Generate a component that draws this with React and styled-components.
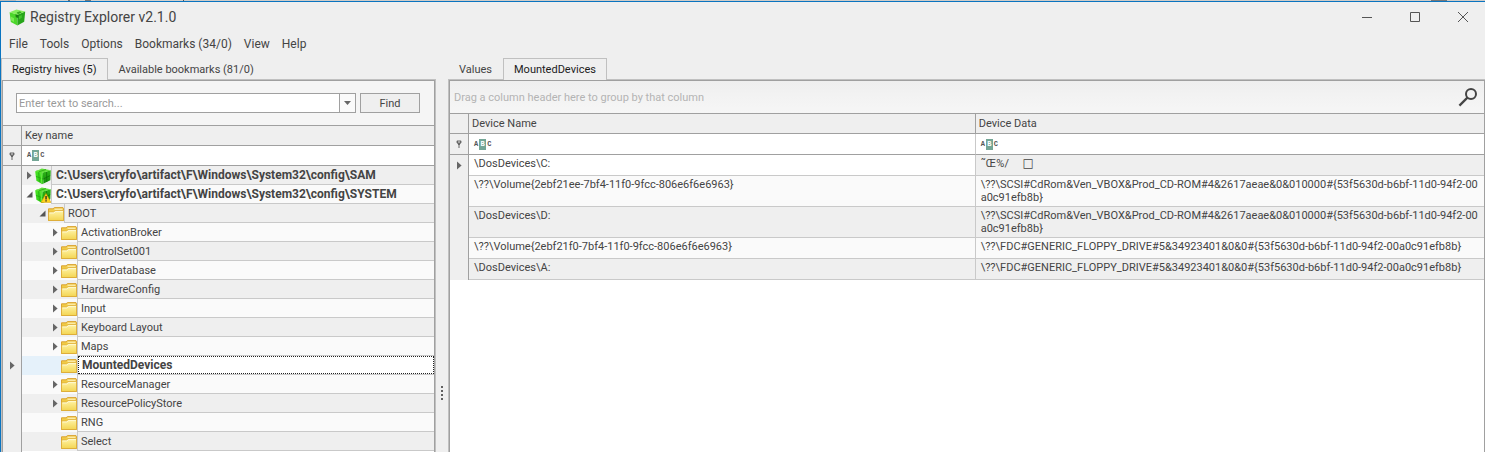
import React from 'react';
import styled, { createGlobalStyle } from 'styled-components';

const c = {
  face: '#efefef',
  alt: '#fafafa',
  text: '#444444',
  edge: '#a0a0a0',
  soft: '#c0c0c0',
  row: '#c9c9c9',
  glyph: '#666666',
  accent: '#0a74c0',
};

const Global = createGlobalStyle`
  * { box-sizing: border-box; }
  body {
    margin: 0;
    background: ${c.face};
    color: ${c.text};
    font: 11px/13px Roboto, "Liberation Sans", sans-serif;
  }
  button, input { font: inherit; color: inherit; margin: 0; }
  svg { display: block; flex: none; }
`;

const Page = styled.div`
  display: flex;
  flex-direction: column;
  height: 100vh;
  overflow: hidden;
`;

const Backdrop = styled.div`
  flex: none;
  height: 1px;
  background: linear-gradient(90deg, #b9b9b9 0 16px, #d3d0cc 16px 68px, #6b6b6b 68px 70px, #d3d0cc 70px 85px, #777 85px 91px, #d3d0cc 91px 183px, #555 183px 184px, #cfccc8 184px calc(100% - 54px), #777 calc(100% - 54px) calc(100% - 38px), #cfccc8 calc(100% - 38px));
`;

const Window = styled.div`
  flex: 1;
  min-height: 0;
  display: flex;
  flex-direction: column;
  border-top: 1px solid ${c.accent};
  border-left: 1px solid ${c.accent};
`;

const TitleBar = styled.header`
  flex: none;
  display: flex;
  align-items: center;
  height: 30px;
  padding-left: 8px;
`;

const Title = styled.h1`
  flex: 1;
  margin: 0 0 0 4px;
  font-size: 14px;
  line-height: 16px;
  font-weight: 400;
`;

const Caption = styled.div`
  display: flex;
  gap: 4px;
`;

const CaptionButton = styled.button`
  display: flex;
  align-items: center;
  justify-content: center;
  width: 44px;
  height: 28px;
  padding: 0;
  border: 0;
  background: none;
`;

const MenuBar = styled.nav`
  flex: none;
  display: flex;
  align-items: center;
  gap: 12px;
  height: 24px;
  padding-left: 8px;
`;

const MenuItem = styled.button`
  padding: 0;
  border: 0;
  background: none;
  font-size: 12px;
  line-height: 16px;
`;

const Workspace = styled.main`
  flex: 1;
  min-height: 0;
  display: grid;
  grid-template-columns: minmax(0, 435fr) 12px minmax(0, 1037fr);
  padding-top: 2px;
`;

const Pane = styled.section`
  display: flex;
  flex-direction: column;
  min-width: 0;
  min-height: 0;
`;

const TabStrip = styled.div`
  flex: none;
  position: relative;
  z-index: 1;
  display: flex;
  height: 22px;
  margin-bottom: -1px;
`;

const Tab = styled.button`
  padding: 0 10px;
  border: 1px solid ${(p) => (p.$active ? c.soft : 'transparent')};
  border-bottom: 0;
  background: ${(p) => (p.$active ? c.face : 'transparent')};
  color: ${(p) => (p.$active ? '#1c1c1c' : c.text)};
  line-height: 20px;
`;

const Frame = styled.div`
  flex: 1;
  min-height: 0;
  border: 1px solid ${c.soft};
  border-bottom: 0;
  ${(p) => p.$flush && 'border-right: 0;'}
`;

const Inner = styled.div`
  height: 100%;
  display: flex;
  flex-direction: column;
  overflow: hidden;
  border: 1px solid ${c.edge};
  border-bottom: 0;
  background: #fff;
`;

const Splitter = styled.div`
  display: flex;
  flex-direction: column;
  align-items: center;
  gap: 2px;
  padding-top: 328px;
`;

const Grip = styled.i`
  flex: none;
  width: 2px;
  height: 2px;
  background: #606060;
`;

const SearchBar = styled.form`
  flex: none;
  display: flex;
  gap: 4px;
  padding: 12px 14px 12px 13px;
  background: #f5f5f5;
`;

const Combo = styled.div`
  flex: 1;
  min-width: 0;
  display: flex;
  height: 20px;
  border: 1px solid ${c.edge};
  background: #fff;
`;

const SearchInput = styled.input`
  flex: 1;
  min-width: 0;
  padding: 0 2px;
  border: 0;
  outline: 0;
  background: none;
  &::placeholder { color: #9a9a9a; opacity: 1; }
`;

const DropButton = styled.button`
  display: flex;
  align-items: center;
  justify-content: center;
  width: 16px;
  padding: 0;
  border: 0;
  border-left: 1px solid ${c.edge};
  background: ${c.alt};
`;

const FindButton = styled.button`
  width: 60px;
  height: 20px;
  padding: 0;
  border: 1px solid ${c.edge};
  background: ${c.face};
`;

const TreeHead = styled.div`
  flex: none;
  display: flex;
  height: 20px;
  border-top: 1px solid ${c.edge};
  line-height: 19px;
  background: ${(p) => (p.$filter ? '#fff' : c.face)};
`;

const Gutter = styled.div`
  flex: none;
  display: flex;
  align-items: center;
  justify-content: center;
  width: 19px;
  border-right: 1px solid ${c.edge};
  background: ${c.face};
`;

const HeadText = styled.div`
  padding-left: 3px;
`;

const FilterCell = styled.label`
  flex: 1;
  display: flex;
  align-items: center;
  padding-left: 5px;
`;

const FilterInput = styled.input`
  flex: 1;
  min-width: 0;
  padding: 0 2px;
  border: 0;
  outline: 0;
  background: none;
`;

const Abc = styled.span`
  display: flex;
  align-items: center;
  gap: 1px;
  font: bold 7px/11px "Liberation Mono", monospace;
  color: #555;
`;

const AbcMark = styled.b`
  width: 7px;
  text-align: center;
  background: #74a696;
  color: #fff;
`;

const Tree = styled.ul`
  flex: 1;
  min-height: 0;
  overflow: hidden;
  margin: 0;
  padding: 0;
  list-style: none;
  border-top: 1px solid ${c.edge};
  background: linear-gradient(90deg, ${c.face} 18px, ${c.edge} 18px 19px, #fff 19px);
`;

const TreeRow = styled.li`
  display: flex;
  height: 19px;
  background: ${(p) => (p.$selected ? '#e5f1fa' : p.$even ? c.face : c.alt)};
`;

const Branch = styled.div`
  flex: none;
  display: flex;
  align-items: center;
  padding-left: ${(p) => 3 + p.$level * 13}px;
`;

const Expander = styled.span`
  width: 9px;
  margin-right: 1px;
  display: flex;
  justify-content: center;
`;

const KeyCell = styled.div`
  flex: 1;
  min-width: 0;
  border-left: 1px solid ${c.row};
  border-bottom: 1px solid ${c.row};
  background: ${(p) => (p.$selected ? '#fff' : 'transparent')};
`;

const KeyName = styled.div`
  height: 18px;
  padding: 0 ${(p) => (p.$bold ? 3 : 2)}px;
  border: 1px ${(p) => (p.$selected ? 'dotted #222' : 'solid transparent')};
  line-height: 18px;
  white-space: nowrap;
  ${(p) => p.$bold && 'font-weight: 700; font-size: 12px; line-height: 16px;'}
`;

const GroupPanel = styled.div`
  flex: none;
  display: flex;
  align-items: center;
  justify-content: space-between;
  height: 32px;
  padding: 0 6px 0 4px;
  background: linear-gradient(#efefef, #f6f6f6);
  color: #b4b4b4;
`;

const IconButton = styled.button`
  padding: 0;
  border: 0;
  background: none;
`;

const Grid = styled.table`
  flex: none;
  width: 100%;
  table-layout: fixed;
  border-collapse: separate;
  border-spacing: 0;
  border-top: 1px solid ${c.edge};
`;

const GutterCol = styled.col`
  width: 19px;
`;

const NameCol = styled.col`
  width: 49%;
`;

const HeadCell = styled.th`
  height: 20px;
  padding: 0 3px;
  border-bottom: 1px solid ${c.edge};
  border-right: ${(p) => (p.$last ? 0 : `1px solid ${c.edge}`)};
  background: ${c.face};
  text-align: left;
  font-weight: 400;
`;

const GridFilterCell = styled.td`
  height: 21px;
  padding: 0;
  border-bottom: 1px solid ${c.edge};
  border-right: ${(p) => (p.$last ? 0 : `1px solid ${c.row}`)};
`;

const GutterCell = styled.td`
  padding: 0;
  border-right: 1px solid ${c.edge};
  border-bottom: ${(p) => (p.$filter ? `1px solid ${c.edge}` : 0)};
  background: ${c.face};
  vertical-align: middle;
`;

const GutterMark = styled.div`
  display: flex;
  justify-content: center;
`;

const DataCell = styled.td`
  height: 21px;
  padding: 2px 4px 2px 5px;
  border-bottom: 1px solid ${c.row};
  border-right: ${(p) => (p.$last ? 0 : `1px solid ${c.row}`)};
  background: ${(p) => (p.$focused ? '#fff' : p.$even ? c.face : c.alt)};
  vertical-align: top;
  word-break: break-all;
  white-space: pre-wrap;
`;

const Unprintable = styled.span`
  font-family: "DejaVu Sans", sans-serif;
  font-size: 12px;
`;

const RightArrow = () => (
  <svg width="5" height="9" viewBox="0 0 5 9" aria-hidden="true"><path d="M0 0.5L4.6 4.5L0 8.5Z" fill={c.glyph} /></svg>
);

const OpenArrow = () => (
  <svg width="7" height="7" viewBox="0 0 7 7" aria-hidden="true"><path d="M6.5 0.5V6.5H0.5Z" fill="#555" /></svg>
);

const Pin = () => (
  <svg width="6" height="8" viewBox="0 0 6 8" aria-hidden="true">
    <path d="M1 .5H5L5.5 1.5V2.5L4 4.2V5H2V4.2L.5 2.5V1.5Z" fill="#666" />
    <path d="M2 1.5H4V2.5H2Z" fill="#ddd" />
    <path d="M2.5 5H3.5V8H2.5Z" fill="#666" />
  </svg>
);

const Cube = ({ size = 16, warn, id }) => (
  <svg width={size} height={size} viewBox="0 0 16 16" aria-hidden="true">
    <defs>
      <linearGradient id={`${id}l`} x1="0" y1="0" x2="1" y2="1"><stop offset="0" stopColor="#4be826" /><stop offset="1" stopColor="#2cc412" /></linearGradient>
      <linearGradient id={`${id}r`} x1="0" y1="0" x2="0" y2="1"><stop offset="0" stopColor="#30b81a" /><stop offset="1" stopColor="#128a0a" /></linearGradient>
    </defs>
    <path d="M0.2 3.6L2 2.2L7.6 4.4L8.6 15.6L7 15.9L1.4 12.8Z" fill={`url(#${id}l)`} />
    <path d="M7.6 4.4L15.8 2.2L15.3 12.2L8.6 15.6Z" fill={`url(#${id}r)`} />
    <path d="M0.4 3.4L6.8 0.6L15.7 2.2L7.6 4.8Z" fill="#5fe038" />
    <path d="M3.8 3.8L11 1.5" stroke="#1f9c10" strokeWidth=".7" />
    <path d="M3.6 4.4L4.5 13.6M1 8.4L8 11" stroke="#1ba50d" strokeWidth=".7" fill="none" />
    <path d="M6 4.6L6.8 15" stroke="#86f55e" strokeWidth=".7" fill="none" />
    <path d="M11.6 4L11.8 14M8.2 11L15.2 7.6" stroke="#0b6a06" strokeWidth=".7" fill="none" />
    {warn && (
      <g>
        <path d="M11 6.4L16 15.6H6Z" fill="#ffd21c" stroke="#d99a00" strokeWidth=".5" />
        <path d="M10.4 9H11.7V12.4H10.4ZM10.4 13.2H11.7V14.5H10.4Z" fill="#222" />
      </g>
    )}
  </svg>
);

const AppCube = () => (
  <svg width="17" height="17" viewBox="0 0 17 17" aria-hidden="true">
    <path d="M.6 3.2L8.6 5.6L8.4 16.6L1.8 13Z" fill="#4bd62a" />
    <path d="M8.6 5.6L16.2 2.6L15.2 12.8L8.4 16.6Z" fill="#27a51a" />
    <path d="M.6 3.2L7.4 .4L16.2 2.6L8.6 5.8Z" fill="#86ee5c" />
    <path d="M7.6 3.4L11 2.2L12.6 3.6L9 5.2Z" fill="#35a820" />
    <path d="M6.4 5.4L9.6 6L9.4 9L6.8 8.2Z" fill="#1b7d12" />
    <path d="M10 7.2L12.8 6V8.8L10 10.4Z" fill="#43c62c" />
    <path d="M1.6 7.6L5 9.2V13L2.2 11.6Z" fill="#7cec54" />
  </svg>
);

const Folder = () => (
  <svg width="16" height="14" viewBox="0 0 16 14" aria-hidden="true">
    <defs>
      <linearGradient id="folderFront" x1="0" y1="0" x2="0" y2="1"><stop offset="0" stopColor="#fff3a6" /><stop offset="1" stopColor="#f3d552" /></linearGradient>
    </defs>
    <path d="M.5 13.5V1.8H5L6.5 .6H15L15.5 1.2V13.5Z" fill="#f1cb45" stroke="#d9a334" />
    <path d="M6.5 2.2H14.5" stroke="#fff8d0" />
    <path d="M.5 13.5V5H5.5L7 3.6H15.5V13.5Z" fill="url(#folderFront)" stroke="#dcab38" strokeWidth=".8" />
    <path d="M1.5 6H6L7.5 4.6H15" stroke="#fffbe0" strokeWidth=".8" fill="none" />
  </svg>
);

const FilterBox = ({ label }) => (
  <FilterCell>
    <Abc aria-hidden="true">A<AbcMark>B</AbcMark>C</Abc>
    <FilterInput aria-label={label} />
  </FilterCell>
);

const keys = [
  { name: 'C:\\Users\\cryfo\\artifact\\F\\Windows\\System32\\config\\SAM', level: 0, state: 'closed', hive: true },
  { name: 'C:\\Users\\cryfo\\artifact\\F\\Windows\\System32\\config\\SYSTEM', level: 0, state: 'open', hive: true, warn: true },
  { name: 'ROOT', level: 1, state: 'open' },
  { name: 'ActivationBroker', level: 2, state: 'closed' },
  { name: 'ControlSet001', level: 2, state: 'closed' },
  { name: 'DriverDatabase', level: 2, state: 'closed' },
  { name: 'HardwareConfig', level: 2, state: 'closed' },
  { name: 'Input', level: 2, state: 'closed' },
  { name: 'Keyboard Layout', level: 2, state: 'closed' },
  { name: 'Maps', level: 2, state: 'closed' },
  { name: 'MountedDevices', level: 2, selected: true },
  { name: 'ResourceManager', level: 2, state: 'closed' },
  { name: 'ResourcePolicyStore', level: 2, state: 'closed' },
  { name: 'RNG', level: 2 },
  { name: 'Select', level: 2 },
];

const cdrom = '\\??\\SCSI#CdRom&Ven_VBOX&Prod_CD-ROM#4&2617aeae&0&010000#{53f5630d-b6bf-11d0-94f2-00a0c91efb8b}';
const floppy = '\\??\\FDC#GENERIC_FLOPPY_DRIVE#5&34923401&0&0#{53f5630d-b6bf-11d0-94f2-00a0c91efb8b}';
const devices = [
  ['\\DosDevices\\C:', <>{'˜Œ%/\u00a0\u00a0\u00a0\u00a0\u00a0'}<Unprintable>□</Unprintable></>],
  ['\\??\\Volume{2ebf21ee-7bf4-11f0-9fcc-806e6f6e6963}', cdrom],
  ['\\DosDevices\\D:', cdrom],
  ['\\??\\Volume{2ebf21f0-7bf4-11f0-9fcc-806e6f6e6963}', floppy],
  ['\\DosDevices\\A:', floppy],
];

const menu = ['File', 'Tools', 'Options', 'Bookmarks (34/0)', 'View', 'Help'];

export default function App() {
  return (
    <Page>
      <Global />
      <Backdrop />
      <Window>
        <TitleBar>
          <AppCube />
          <Title>Registry Explorer v2.1.0</Title>
          <Caption>
            <CaptionButton aria-label="Minimize">
              <svg width="10" height="10" viewBox="0 0 10 10"><path d="M0 5.5H10" stroke="#555" /></svg>
            </CaptionButton>
            <CaptionButton aria-label="Maximize">
              <svg width="10" height="10" viewBox="0 0 10 10"><path d="M.5 .5H9.5V9.5H.5Z" stroke="#555" fill="none" /></svg>
            </CaptionButton>
            <CaptionButton aria-label="Close">
              <svg width="10" height="10" viewBox="0 0 10 10"><path d="M0 0L10 10M10 0L0 10" stroke="#555" /></svg>
            </CaptionButton>
          </Caption>
        </TitleBar>
        <MenuBar>
          {menu.map((m) => <MenuItem key={m}>{m}</MenuItem>)}
        </MenuBar>
        <Workspace>
          <Pane>
            <TabStrip role="tablist">
              <Tab role="tab" aria-selected="true" $active>Registry hives (5)</Tab>
              <Tab role="tab" aria-selected="false">Available bookmarks (81/0)</Tab>
            </TabStrip>
            <Frame>
              <Inner>
                <SearchBar onSubmit={(e) => e.preventDefault()}>
                  <Combo>
                    <SearchInput aria-label="Search keys" placeholder="Enter text to search..." />
                    <DropButton type="button" aria-label="Search history">
                      <svg width="7" height="4" viewBox="0 0 7 4"><path d="M0 0H7L3.5 4Z" fill="#666" /></svg>
                    </DropButton>
                  </Combo>
                  <FindButton type="submit">Find</FindButton>
                </SearchBar>
                <TreeHead>
                  <Gutter />
                  <HeadText>Key name</HeadText>
                </TreeHead>
                <TreeHead $filter>
                  <Gutter><Pin /></Gutter>
                  <FilterBox label="Filter key name" />
                </TreeHead>
                <Tree role="tree">
                  {keys.map((k, i) => (
                    <TreeRow key={k.name} role="treeitem" aria-selected={!!k.selected} $even={i % 2 === 0} $selected={k.selected}>
                      <Gutter>{k.selected && <RightArrow />}</Gutter>
                      <Branch $level={k.level}>
                        <Expander>
                          {k.state === 'closed' && <RightArrow />}
                          {k.state === 'open' && <OpenArrow />}
                        </Expander>
                        {k.hive ? <Cube id={`cube${i}`} warn={k.warn} /> : <Folder />}
                      </Branch>
                      <KeyCell $selected={k.selected}>
                        <KeyName $selected={k.selected} $bold={k.hive || k.selected}>{k.name}</KeyName>
                      </KeyCell>
                    </TreeRow>
                  ))}
                </Tree>
              </Inner>
            </Frame>
          </Pane>
          <Splitter role="separator" aria-orientation="vertical">
            <Grip /><Grip /><Grip /><Grip />
          </Splitter>
          <Pane>
            <TabStrip role="tablist">
              <Tab role="tab" aria-selected="false">Values</Tab>
              <Tab role="tab" aria-selected="true" $active>MountedDevices</Tab>
            </TabStrip>
            <Frame $flush>
              <Inner>
                <GroupPanel>
                  Drag a column header here to group by that column
                  <IconButton aria-label="Find in table">
                    <svg width="20" height="20" viewBox="0 0 20 20">
                      <circle cx="13" cy="7" r="5" fill="none" stroke="#444" strokeWidth="2" />
                      <path d="M9.4 10.6L1.4 18.6" stroke="#444" strokeWidth="2.2" />
                    </svg>
                  </IconButton>
                </GroupPanel>
                <Grid>
                  <colgroup><GutterCol /><NameCol /><col /></colgroup>
                  <thead>
                    <tr>
                      <HeadCell as="td" />
                      <HeadCell scope="col">Device Name</HeadCell>
                      <HeadCell scope="col" $last>Device Data</HeadCell>
                    </tr>
                    <tr>
                      <GutterCell $filter><GutterMark><Pin /></GutterMark></GutterCell>
                      <GridFilterCell><FilterBox label="Filter device name" /></GridFilterCell>
                      <GridFilterCell $last><FilterBox label="Filter device data" /></GridFilterCell>
                    </tr>
                  </thead>
                  <tbody>
                    {devices.map(([name, data], i) => (
                      <tr key={name}>
                        <GutterCell>{i === 0 && <GutterMark><RightArrow /></GutterMark>}</GutterCell>
                        <DataCell $even={i % 2 === 0} $focused={i === 0}>{name}</DataCell>
                        <DataCell $even={i % 2 === 0} $last>{data}</DataCell>
                      </tr>
                    ))}
                  </tbody>
                </Grid>
              </Inner>
            </Frame>
          </Pane>
        </Workspace>
      </Window>
    </Page>
  );
}
